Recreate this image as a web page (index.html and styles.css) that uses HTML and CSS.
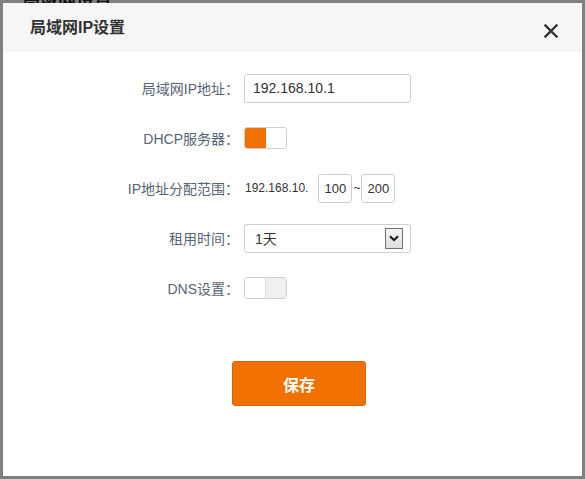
FILE: index.html
```html
<!DOCTYPE html>
<html lang="zh-CN">
<head>
    <meta charset="UTF-8">
    <meta name="viewport" content="width=device-width, initial-scale=1.0">
    <title>局域网IP设置</title>
    <link rel="stylesheet" href="styles.css">
</head>
<body>
    <div class="page-behind">局域网设置</div>

    <div class="dialog">
        <div class="dialog-header">
            <h2>局域网IP设置</h2>
            <button class="close-btn" aria-label="关闭">
                <svg width="14" height="14" viewBox="0 0 14 14">
                    <path d="M1.5 1.5 L12.5 12.5 M12.5 1.5 L1.5 12.5" stroke="#333" stroke-width="2.4" stroke-linecap="square"/>
                </svg>
            </button>
        </div>

        <div class="dialog-body">
            <div class="form-row">
                <label class="form-label">局域网IP地址<span class="colon">：</span></label>
                <input class="text-input wide" type="text" value="192.168.10.1">
            </div>

            <div class="form-row">
                <label class="form-label">DHCP服务器<span class="colon">：</span></label>
                <div class="switch on"><span class="track"></span><span class="knob"></span></div>
            </div>

            <div class="form-row">
                <label class="form-label">IP地址分配范围<span class="colon">：</span></label>
                <span class="ip-prefix">192.168.10.</span>
                <input class="text-input short" type="text" value="100">
                <span class="tilde">~</span>
                <input class="text-input short" type="text" value="200">
            </div>

            <div class="form-row">
                <label class="form-label">租用时间<span class="colon">：</span></label>
                <div class="select-box">
                    <span class="select-value">1天</span>
                    <span class="select-arrow">
                        <svg width="10" height="7" viewBox="0 0 10 7">
                            <path d="M1 1.2 L5 5.2 L9 1.2" fill="none" stroke="#111" stroke-width="2"/>
                        </svg>
                    </span>
                </div>
            </div>

            <div class="form-row">
                <label class="form-label">DNS设置<span class="colon">：</span></label>
                <div class="switch off"><span class="knob"></span><span class="track"></span></div>
            </div>

            <div class="actions">
                <button class="save-btn">保存</button>
            </div>
        </div>
    </div>
</body>
</html>
```

FILE: styles.css
```css
:root {
    --orange: #f07000;
    --label-color: #566473;
    --text-color: #333;
    --border-color: #cfcfcf;
}

html, body {
    height: 100%;
}

body {
    margin: 0;
    padding: 3px;
    box-sizing: border-box;
    background-color: #808080;
    font-family: "Liberation Sans", "Noto Sans CJK SC", sans-serif;
    color: var(--text-color);
    position: relative;
    overflow: hidden;
}

/* page under the overlay, only its bottom edge shows */
.page-behind {
    position: absolute;
    top: -14px;
    left: 22px;
    font-size: 18px;
    font-weight: bold;
    color: #111;
}

.dialog {
    position: relative;
    width: 579px;
    height: 473px;
    background-color: #fff;
}

.dialog-header {
    height: 49px;
    background-color: #f6f6f6;
    display: flex;
    align-items: center;
    justify-content: space-between;
    padding: 0 24px 0 27px;
}

.dialog-header h2 {
    margin: -4px 0 0 0;
    font-size: 16px;
    font-weight: bold;
    color: #333;
}

.close-btn {
    border: none;
    background: none;
    padding: 0;
    width: 14px;
    height: 14px;
    margin-top: 6px;
    cursor: pointer;
}

.close-btn svg {
    display: block;
}

.dialog-body {
    padding-top: 11px;
}

.form-row {
    display: flex;
    align-items: center;
    height: 50px;
}

.form-label {
    width: 241px;
    padding-right: 5px;
    box-sizing: border-box;
    text-align: right;
    font-size: 14px;
    color: var(--label-color);
}

.form-label .colon {
    font-family: "Noto Sans CJK JP", sans-serif;
}

.text-input {
    box-sizing: border-box;
    height: 29px;
    border: 1px solid var(--border-color);
    border-radius: 3px;
    font-family: inherit;
    font-size: 14px;
    color: var(--text-color);
    outline: none;
}

.text-input.wide {
    width: 167px;
    padding: 0 8px;
}

.text-input.short {
    width: 34px;
    padding: 0 3px;
    text-align: center;
    font-size: 13px;
}

.ip-prefix {
    font-size: 12px;
    color: var(--text-color);
    margin: 0 10px 0 1px;
}

.tilde {
    font-size: 12px;
    width: 9px;
    text-align: center;
}

.switch {
    display: flex;
    width: 43px;
    height: 22px;
    box-sizing: border-box;
    border: 1px solid var(--border-color);
    border-radius: 3px;
    overflow: hidden;
}

.switch .track,
.switch .knob {
    flex: 1;
}

.switch .knob {
    background-color: #fff;
}

.switch.on .track {
    background-color: var(--orange);
}

.switch.off .track {
    background-color: #f0f0f0;
    border-left: 1px solid #dcdcdc;
}

.select-box {
    box-sizing: border-box;
    width: 167px;
    height: 29px;
    border: 1px solid var(--border-color);
    border-radius: 3px;
    display: flex;
    align-items: center;
    justify-content: space-between;
    padding: 0 7px 0 10px;
}

.select-value {
    font-size: 14px;
    color: var(--text-color);
}

.select-arrow {
    width: 18px;
    height: 21px;
    box-sizing: border-box;
    border: 1px solid #6f6f6f;
    background: linear-gradient(#f4f4f4, #dedede);
    display: flex;
    align-items: center;
    justify-content: center;
}

.actions {
    padding: 48px 0 0 229px;
}

.save-btn {
    width: 134px;
    height: 45px;
    border: 1px solid #d86400;
    border-radius: 3px;
    background-color: var(--orange);
    color: #fff;
    font-family: inherit;
    font-size: 16px;
    font-weight: bold;
    cursor: pointer;
}
```
